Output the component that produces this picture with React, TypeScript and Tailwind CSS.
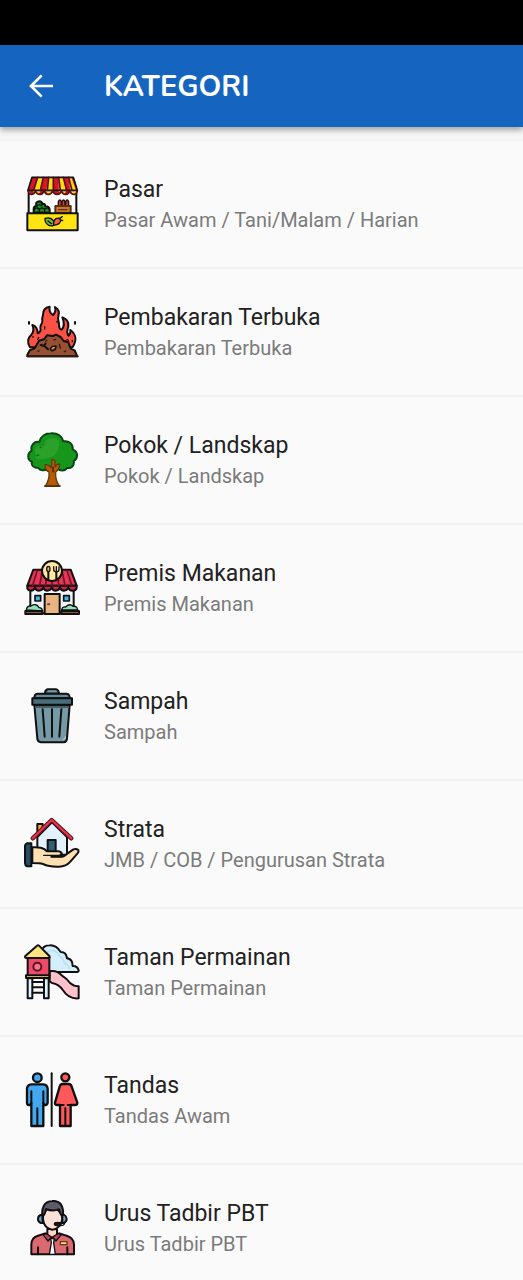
import type { ReactNode } from "react";

function Icon({ children }: { children: ReactNode }) {
  return (
    <svg
      viewBox="24 24 168 168"
      className="size-14 shrink-0"
      fill="none"
      stroke="#101010"
      strokeWidth="6"
      strokeLinecap="round"
      strokeLinejoin="round"
      aria-hidden="true"
    >
      {children}
    </svg>
  );
}

const MarketIcon = () => (
  <Icon>
    <path d="M38 76V138M181 76V138" />
    <path d="M53 133v-10q0-9 9-9-6-12 8-14 8 0 8 8 10-3 10 7 12 0 13 10v9z" fill="#159322" />
    <path d="M54 124q8-8 16 0v9M70 124q8-8 16 0v9M62 114q9-8 16 0M86 124q8-7 14 0" strokeWidth="4" />
    <path d="M127 112v-11q5-10 9 0v11M138 112v-11q5-10 9 0v11M149 112v-11q5-10 9 0v11" fill="#e63a28" strokeWidth="4" />
    <path d="M118 114h46v22h-46z" fill="#c8772b" stroke="#5b2e10" />
    <path d="M128 125h25" stroke="#5b2e10" strokeWidth="4" />
    <path d="M48 28h124l12 39q-1 12-12 12-9 0-12-9-3 9-12 9-10 0-13-9-3 9-12 9-10 0-13-9-3 9-12 9-10 0-13-9-3 9-12 9-10 0-13-9-3 9-11 9-10 0-11-12z" fill="#d81428" stroke="none" />
    <path d="M65 28h17l-9 42q-3 9-11 9-8 0-11-9zM98 28h14v42q-3 9-12 9-7 0-10-9zM128 28h14l8 42q-3 9-10 9-8 0-12-9zM158 28h8l14 39q0 12-8 12-7 0-9-9z" fill="#ffdb12" stroke="none" />
    <path d="M48 28h124l12 39H36z" strokeWidth="5" />
    <path d="M36 67q0 12 10 12 9 0 12-11 4 11 14 11 9 0 12-11 4 11 13 11 9 0 13-11 4 11 13 11 10 0 13-11 4 11 13 11 9 0 12-11 4 11 14 11 9 0 9-12M65 28L53 67M82 28l-9 39M98 28l-4 39M112 28v39M128 28l5 39M142 28l10 39M158 28l10 39" stroke="#54101a" strokeWidth="5" />
    <path d="M34 136h151v51H34z" fill="#ffe411" />
    <path d="M87 151q17-5 25 7 6 7 1 14-13 5-22-6-5-7-4-15z" fill="#75be24" strokeWidth="4" />
    <path d="M113 172q-2-15 7-20 11-5 14 5 0 13-21 15z" fill="#ee633d" strokeWidth="4" />
    <path d="M131 151l8-5M134 156l6 2M96 159l11 8" strokeWidth="4" />
  </Icon>
);

const FireIcon = () => (
  <Icon>
    <path d="M42 154c-9-15-7-28 4-38 9-9 7-19 3-29 14 4 16 15 16 25 8-2 10-10 8-17-1-8 8-13 6-22-2-9 2-10 2-17 0-12 7-22 20-24-3 14 2 20 10 25 8-8 9-14 6-24 14 8 13 19 10 28-4 10 3 14 2 27 0 7 2 12 8 13 8-9 7-25 2-37 15 5 19 16 18 26-1 11-8 16-1 28 6-2 8-8 7-16 17 12 20 31 7 51z" fill="#fb5245" />
    <path d="M39 78v5M177 78v5" />
    <path d="M86 92v7M51 121v3M123 76v3M160 113l-2 7M65 130l3-5M169 133v4" strokeWidth="4" />
    <path d="M34 181v-5l8-14 14-5 13-23 15-4 9-12 18 2 9-4 14 7 9 12 14 4 7 19 12 5 8 18z" fill="#965032" />
    <path d="M34 181h151" stroke="#321b13" />
    <path d="M74 147l11 3 11 10M84 148l5-5" strokeWidth="6" />
    <path d="M103 158q7-11 17-7-1 12-14 13z" fill="#e99a25" strokeWidth="5" />
    <path d="M130 145l3 11M114 132l5-2M148 135q9-10 10 4M93 133l-4 3M66 165h3M145 167l4-2" strokeWidth="4" stroke="#321b13" />
  </Icon>
);

const TreeIcon = () => (
  <Icon>
    <path d="M94 134c-9 8-22 6-27-2-13 0-22-7-19-18-16-7-14-27-1-34-4-16 8-29 23-26 4-17 18-26 34-26 18-1 33 7 38 24 17-3 30 8 28 24 17 7 17 27 3 35 3 14-7 23-20 21-6 10-21 10-29 1z" fill="#16961b" stroke="#0c4515" />
    <path d="M56 78q4-13 18-13 14 7 13-12 10-13 23-11 12 1 20 8 1 30-17 45-22 14-52 10" fill="#4caf43" fillOpacity=".4" stroke="none" />
    <path d="M63 95l5-2M72 69l3 2" stroke="#0b6d19" strokeWidth="4" />
    <path d="M88 187q13-21 11-43-13-6-12-22 12 0 18 9 3-7 2-24 9-1 10 3v19q6-11 14-9-1 16-12 24-2 25 12 43z" fill="#b65a08" stroke="#633b12" strokeWidth="4" />
    <path d="M86 186h46M111 130v13" stroke="#4d2c13" strokeWidth="5" />
  </Icon>
);

const RestaurantIcon = () => (
  <Icon>
    <path d="M43 106h130v78H43z" fill="#f3f5f8" />
    <path d="M52 53h112l18 48H34z" fill="#e93656" />
    <path d="M34 101v8q2 7 10 7 10 0 13-9 3 9 12 9t13-9q3 9 12 9t13-9q3 9 12 9t13-9q3 9 12 9t13-9q3 9 12 9 12 0 13-9v-6z" fill="#c92345" />
    <path d="M64 55L50 100M79 55l-8 45M92 55l-3 45M108 55v45M124 55l4 45M138 55l9 45M153 55l14 45" stroke="#701329" strokeWidth="5" />
    <circle cx="108" cy="57" r="30" fill="#ffe9a0" />
    <path d="M97 57v25M121 59v23" strokeWidth="6" />
    <ellipse cx="97" cy="51" rx="5" ry="8" fill="#e9b763" strokeWidth="4" />
    <path d="M113 44v8q0 8 8 8t8-8v-8M121 44v15" strokeWidth="4" />
    <path d="M57 131h17v16H57zM143 131h17v16h-17z" fill="#49b3e8" strokeWidth="5" />
    <path d="M86 126h45v60H86z" fill="#e7b482" />
    <path d="M96 157h4" stroke="#79462e" />
    <path d="M31 174q1-13 14-12 16-10 24 5 10 0 10 10zM137 174q1-11 12-9 12-12 22-2 13-2 14 11z" fill="#91dfb7" strokeWidth="4" />
    <path d="M28 177h51v9H28zM136 177h53v9h-53z" fill="#8e563b" />
  </Icon>
);

const BinIcon = () => (
  <Icon>
    <path d="M87 43q-1-13 8-15h25q9 2 9 15z" fill="#3f626c" />
    <path d="M97 34h23" stroke="#7099a4" />
    <path d="M54 55l3-10q2-4 8-4h86q7 0 8 4l3 10z" fill="#638b96" />
    <path d="M49 55h119v19H49z" fill="#486f7b" />
    <path d="M55 75h106l-8 101q-1 10-10 11H75q-10-1-11-11z" fill="#7599a5" />
    <path d="M60 81h96" stroke="#46616a" strokeWidth="6" />
    <path d="M80 88l6 82M108 88v82M136 88l-6 82" />
    <path d="M143 178q4 0 5-7" stroke="#bed0d5" strokeWidth="4" />
  </Icon>
);

const HandHouseIcon = () => (
  <Icon>
    <path d="M64 73V48h16v18" fill="#ffb322" />
    <path d="M64 87l44-44 45 44v53H64z" fill="#e3f2ff" />
    <path d="M95 96h24v36H95z" fill="#315f78" />
    <path d="M50 91l57-55 59 55" stroke="#5b1420" strokeWidth="13" />
    <path d="M50 91l57-55 59 55" stroke="#ee3448" strokeWidth="6" />
    <path d="M49 118q12-1 25 1 13 3 18 11h35q10 1 10 8 0 8-10 8h-21 31q8 0 18-10l17-12q9-3 15 2 2 5-3 11l-21 24q-13 15-34 15-29 1-48-8-9-3-32-3z" fill="#ffdfb2" />
    <path d="M83 142h44q10 0 10-7M107 146h27" strokeWidth="4" />
    <path d="M33 106h13v69H33q-6-3-6-9v-51q0-7 6-9z" fill="#244e64" />
  </Icon>
);

const PlaygroundIcon = () => (
  <Icon>
    <path d="M76 103V48q4-20 25-20 20-1 33 20 17 0 19 19 17 2 17 23 14-1 18 13 0 5-5 5h-77z" fill="#d4eefb" />
    <path d="M90 60q5-20 22-16 13 3 18 16 13 5 14 20 12 5 16 17" stroke="#b9e0ef" strokeWidth="5" />
    <path d="M101 106q22-4 37 13 15 9 24 22 11 10 26 10v36q-30 3-47-24-12-19-33-22l-7-5z" fill="#ffc2ca" />
    <path d="M35 65h65v55H35z" fill="#ef4b69" />
    <circle cx="64" cy="92" r="12" fill="#ff718a" stroke="#551827" />
    <path d="M63 29q3-3 6 0l31 31q3 6-4 6H31q-6-1-3-6z" fill="#ffe37e" />
    <path d="M30 118h70v8H30z" fill="#ffe37e" />
    <path d="M35 127h14v60H35zM84 127h14v60H84z" fill="#dff5ff" />
    <path d="M50 138h34M50 154h34M50 170h34" strokeWidth="6" />
  </Icon>
);

const ToiletIcon = () => (
  <Icon>
    <path d="M107 28v158" />
    <circle cx="64" cy="41" r="13" fill="#43a8f1" strokeWidth="7" />
    <path d="M46 61h36q12 1 13 13v42q-1 7-7 7-5 0-6-6v69H46v-69q-1 6-7 6-6 0-6-7V74q1-12 13-13z" fill="#43a8f1" strokeWidth="7" />
    <path d="M46 82v35M82 82v35M64 133v51" />
    <circle cx="148" cy="40" r="12" fill="#ff585b" strokeWidth="7" />
    <path d="M139 60h19q7 0 9 8l17 48q0 7-8 7h-12v63h-32v-63h-8q-8 0-7-7l14-48q2-8 8-8z" fill="#ff585b" strokeWidth="7" />
    <path d="M148 133v51M133 123h10M155 123h10" />
  </Icon>
);

const SupportIcon = () => (
  <Icon>
    <path d="M46 187v-30q1-20 18-25l23-8q21 18 43 0l24 8q19 6 20 25v30z" fill="#dc6972" />
    <path d="M94 111v17l15 13 14-13v-17z" fill="#ffd5c8" />
    <path d="M81 67v15q3 26 27 31 25-2 31-31V67L119 48H96z" fill="#ffe2d6" />
    <path d="M79 76q-5-47 29-49 37-3 33 47-9-6-12-22-20 7-39-1-2 16-11 25z" fill="#5d5b68" />
    <path d="M79 69h-5q-8 3-8 12 0 9 9 12h5zM139 69h6q7 4 7 12t-8 12h-5z" fill="#73a3ce" />
    <path d="M145 93q1 8-12 8" strokeWidth="4" />
    <ellipse cx="125" cy="96" rx="9" ry="4" fill="#9c1b2d" />
    <path d="M90 125l17 10-11 12-15-19zM127 125l-18 10 11 12 16-19z" fill="#b84656" strokeWidth="4" />
    <path d="M104 140h11l-2 12 5 35h-18l6-35z" fill="#f5f7fb" strokeWidth="4" />
    <path d="M133 149h20v9h-20z" fill="#ffe15f" stroke="#603721" strokeWidth="4" />
    <path d="M66 166v21M154 166v21" />
  </Icon>
);

const categories = [
  { title: "Pasar", detail: "Pasar Awam / Tani/Malam / Harian", Art: MarketIcon },
  { title: "Pembakaran Terbuka", detail: "Pembakaran Terbuka", Art: FireIcon },
  { title: "Pokok / Landskap", detail: "Pokok / Landskap", Art: TreeIcon },
  { title: "Premis Makanan", detail: "Premis Makanan", Art: RestaurantIcon },
  { title: "Sampah", detail: "Sampah", Art: BinIcon },
  { title: "Strata", detail: "JMB / COB / Pengurusan Strata", Art: HandHouseIcon },
  { title: "Taman Permainan", detail: "Taman Permainan", Art: PlaygroundIcon },
  { title: "Tandas", detail: "Tandas Awam", Art: ToiletIcon },
  { title: "Urus Tadbir PBT", detail: "Urus Tadbir PBT", Art: SupportIcon },
];

export default function App() {
  return (
    <div className="flex h-screen flex-col bg-[#fafafa] font-['Roboto',sans-serif]">
      <div className="h-[45px] shrink-0 bg-black" />
      <header className="relative flex h-[82px] shrink-0 items-center bg-[#1565c0] pl-5 text-white shadow-[0_3px_6px_rgba(0,0,0,0.35)]">
        <button type="button" aria-label="Kembali" className="flex size-[42px] items-center justify-center">
          <svg viewBox="0 0 24 24" className="size-8" fill="none" stroke="currentColor" strokeWidth="2" aria-hidden="true">
            <path d="M21 12H5M12.5 4l-8 8 8 8" />
          </svg>
        </button>
        <h1 className="ml-[42px] pt-0.5 font-['Nunito','Lato',sans-serif] text-[29px] leading-8 font-bold">KATEGORI</h1>
      </header>
      <main className="min-h-0 flex-1 overflow-y-auto [scrollbar-width:none]">
        <div className="h-3.5 border-b-2 border-[#f3f3f3] bg-[#f7f7f7]" />
        <ul>
          {categories.map(({ title, detail, Art }) => (
            <li key={title}>
              <a href="#" className="flex h-32 items-center gap-6 border-b-2 border-[#f3f3f3] pl-6">
                <Art />
                <div className="min-w-0 pt-0.5">
                  <h2 className="text-[23px] leading-[30px] text-[#212121]">{title}</h2>
                  <p className="text-[20px] leading-[30px] text-[#7b7b7b]">{detail}</p>
                </div>
              </a>
            </li>
          ))}
        </ul>
      </main>
    </div>
  );
}
